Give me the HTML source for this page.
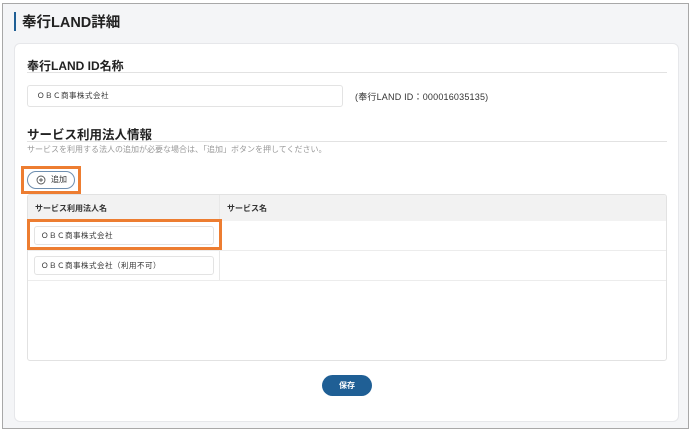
<html><head><style>
body{margin:0;width:692px;height:432px;background:#fff;font-family:"Liberation Sans","Noto Sans CJK JP",sans-serif;position:relative;overflow:hidden}
.frame{position:absolute;left:2px;top:3px;width:685px;height:424px;border:1px solid #a8a8a8;background:#f4f5f7}
.a{position:absolute}
.card{left:14px;top:43px;width:665px;height:379px;background:#fff;border-radius:6px;border:1px solid #e6e7ea;box-sizing:border-box}
.h{font-weight:bold;color:#222;font-size:12px}
.line{height:1px;background:#e2e2e2}
.inp{background:#fff;border:1px solid #e3e3e3;border-radius:3px;box-sizing:border-box;font-size:7.5px;color:#333;padding-left:9px;letter-spacing:.5px}
.or{border:3px solid #ed7d31;box-sizing:border-box}
</style></head><body>
<div class="frame"></div>
<div class="a" style="left:14px;top:12px;width:2px;height:19px;background:#1f5f95"></div>
<div class="a" style="left:22px;top:11px;font-size:14.5px;font-weight:bold;color:#222">奉行LAND詳細</div>
<div class="a card"></div>
<div class="a h" style="left:27px;top:57px">奉行LAND ID名称</div>
<div class="a line" style="left:27px;top:72px;width:640px"></div>
<div class="a inp" style="left:27px;top:85px;width:316px;height:22px;line-height:20px">ＯＢＣ商事株式会社</div>
<div class="a" style="left:355px;top:90px;font-size:9px;color:#333;letter-spacing:.2px">(奉行LAND ID：000016035135)</div>
<div class="a h" style="left:27px;top:124px;font-size:12.5px">サービス利用法人情報</div>
<div class="a line" style="left:27px;top:141px;width:640px"></div>
<div class="a" style="left:27px;top:144px;font-size:8px;color:#999">サービスを利用する法人の追加が必要な場合は、「追加」ボタンを押してください。</div>
<div class="a or" style="left:21px;top:166px;width:60px;height:28px"></div>
<div class="a" style="left:27px;top:171px;width:48px;height:18px;border:1px solid #6f8fb0;border-radius:9px;box-sizing:border-box;font-size:8px;color:#333;line-height:16px;padding-left:23px">追加</div>
<svg class="a" style="left:36px;top:175px" width="10" height="10" viewBox="0 0 10 10"><circle cx="5" cy="5" r="4" fill="none" stroke="#555" stroke-width="0.9"/><path d="M5 3v4M3 5h4" stroke="#555" stroke-width="0.9"/></svg>
<div class="a" style="left:27px;top:194px;width:640px;height:167px;border:1px solid #e2e2e2;border-radius:3px;box-sizing:border-box;overflow:hidden">
 <div class="a" style="left:0;top:0;width:640px;height:26px;background:#f2f2f2"></div>
 <div class="a" style="left:191px;top:0;width:1px;height:86px;background:#e8e8e8"></div>
 <div class="a" style="left:0;top:55px;width:640px;height:1px;background:#ececec"></div>
 <div class="a" style="left:0;top:85px;width:640px;height:1px;background:#ececec"></div>
 <div class="a" style="left:7px;top:8px;font-size:8px;font-weight:bold;color:#333">サービス利用法人名</div>
 <div class="a" style="left:199px;top:8px;font-size:8px;font-weight:bold;color:#333">サービス名</div>
 <div class="a inp" style="left:6px;top:31px;width:180px;height:19px;line-height:17px;padding-left:6px">ＯＢＣ商事株式会社</div>
 <div class="a inp" style="left:6px;top:61px;width:180px;height:19px;line-height:17px;padding-left:6px">ＯＢＣ商事株式会社（利用不可）</div>
</div>
<div class="a or" style="left:27px;top:219px;width:195px;height:31px"></div>
<div class="a" style="left:322px;top:375px;width:50px;height:21px;background:#1f5f95;border-radius:11px;color:#fff;font-size:8px;font-weight:bold;text-align:center;line-height:21px">保存</div>
</body></html>
